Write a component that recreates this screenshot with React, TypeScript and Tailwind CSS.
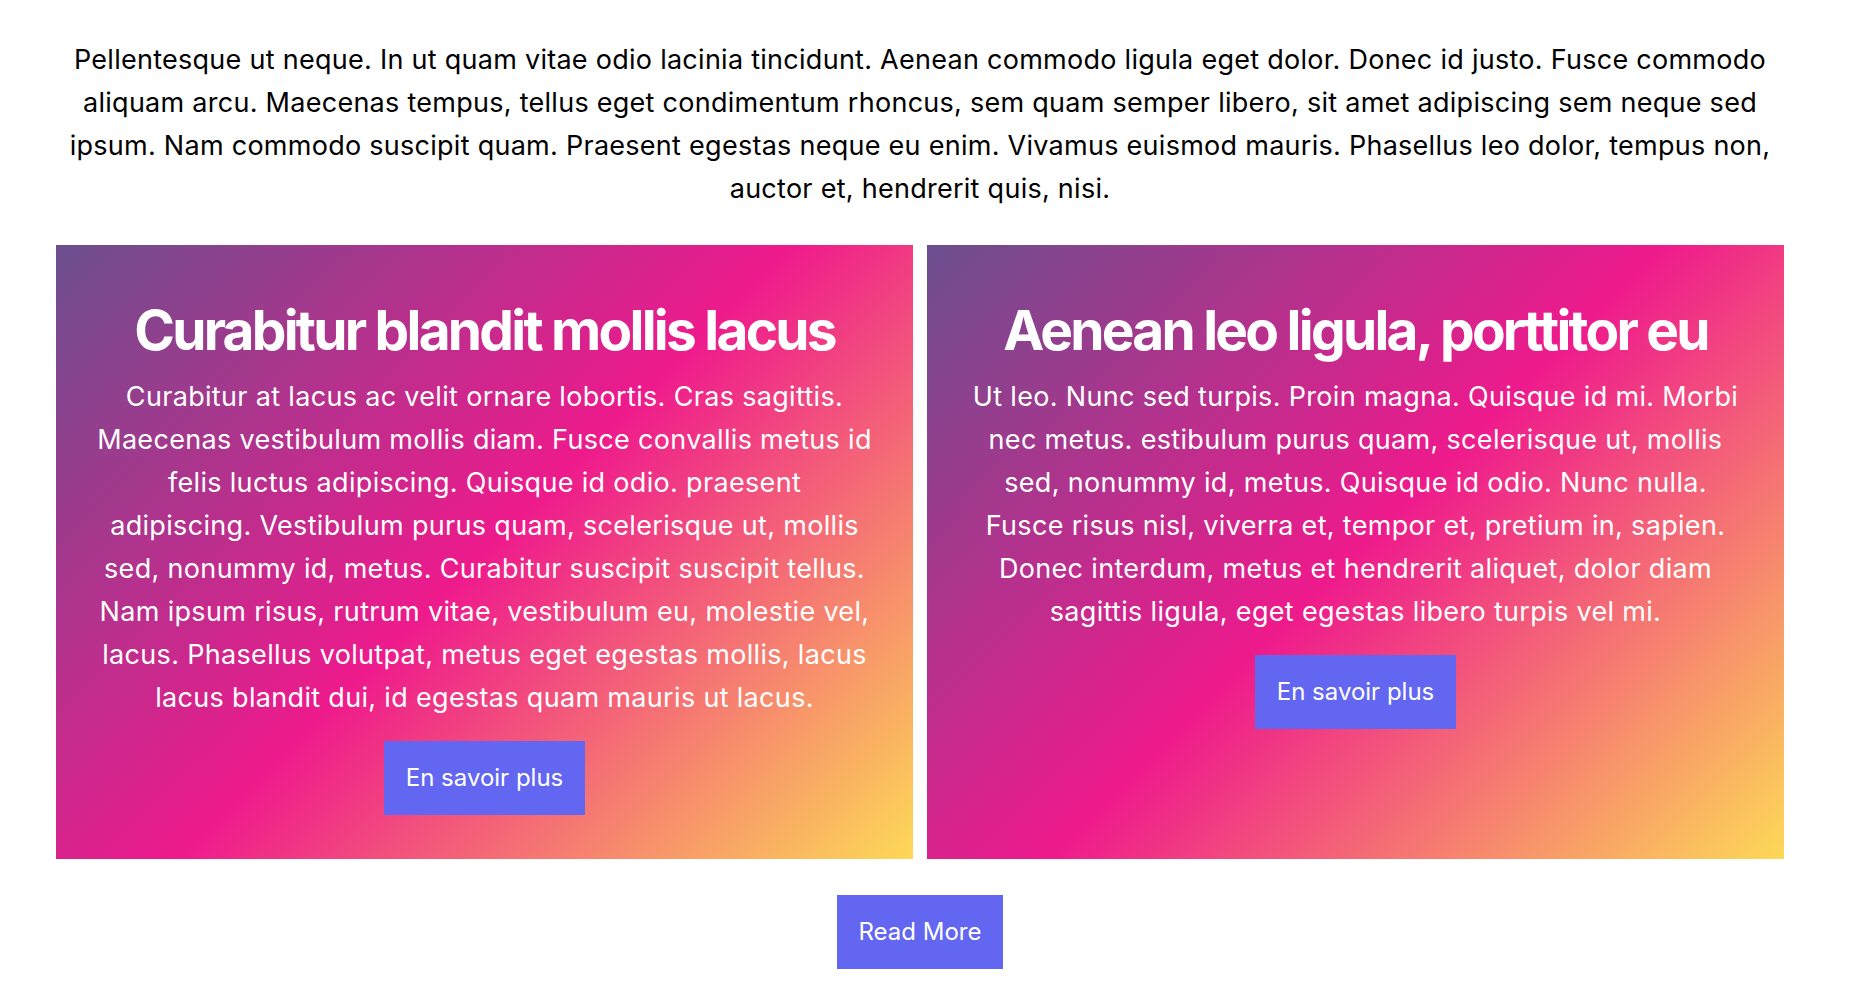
const CARDS = [
  {
    title: "Curabitur blandit mollis lacus",
    body: "Curabitur at lacus ac velit ornare lobortis. Cras sagittis. Maecenas vestibulum mollis diam. Fusce convallis metus id felis luctus adipiscing. Quisque id odio. praesent adipiscing. Vestibulum purus quam, scelerisque ut, mollis sed, nonummy id, metus. Curabitur suscipit suscipit tellus. Nam ipsum risus, rutrum vitae, vestibulum eu, molestie vel, lacus. Phasellus volutpat, metus eget egestas mollis, lacus lacus blandit dui, id egestas quam mauris ut lacus.",
  },
  {
    title: "Aenean leo ligula, porttitor eu",
    body: "Ut leo. Nunc sed turpis. Proin magna. Quisque id mi. Morbi nec metus. estibulum purus quam, scelerisque ut, mollis sed, nonummy id, metus. Quisque id odio. Nunc nulla. Fusce risus nisl, viverra et, tempor et, pretium in, sapien. Donec interdum, metus et hendrerit aliquet, dolor diam sagittis ligula, eget egestas libero turpis vel mi.",
  },
];

export default function App() {
  return (
    <div className="min-h-screen bg-white font-['Inter',sans-serif]">
      <div className="ml-[56px] w-[1728px] pt-[38px] pb-[33px]">
        <p className="text-center text-[27px] leading-[43px] tracking-[0.01em] text-black">
          Pellentesque ut neque. In ut quam vitae odio lacinia tincidunt. Aenean
          commodo ligula eget dolor. Donec id justo. Fusce commodo aliquam arcu.
          Maecenas tempus, tellus eget condimentum rhoncus, sem quam semper
          libero, sit amet adipiscing sem neque sed ipsum. Nam commodo suscipit
          quam. Praesent egestas neque eu enim. Vivamus euismod mauris.
          Phasellus leo dolor, tempus non, auctor et, hendrerit quis, nisi.
        </p>

        <div className="mt-[35px] grid grid-cols-2 gap-[14px]">
          {CARDS.map((c) => (
            <div
              key={c.title}
              className="flex flex-col items-center bg-linear-135/srgb from-[#6b4f8e] via-[#ee1a8c] to-[#fdd957] px-[39px] pt-[58px] pb-11 text-center text-white"
            >
              <h2 className="text-[55px] font-bold leading-none tracking-[-0.05em]">
                {c.title}
              </h2>
              <p className="mt-[17px] text-[27px] leading-[43px] tracking-[0.012em]">
                {c.body}
              </p>
              <button className="mt-[22px] bg-[#6366f1] px-[22px] py-4 text-[24px] leading-[42px] text-white">
                En savoir plus
              </button>
            </div>
          ))}
        </div>

        <div className="mt-9 flex justify-center">
          <button className="bg-[#6366f1] px-[22px] py-4 text-[24px] leading-[42px] text-white">
            Read More
          </button>
        </div>
      </div>
    </div>
  );
}
